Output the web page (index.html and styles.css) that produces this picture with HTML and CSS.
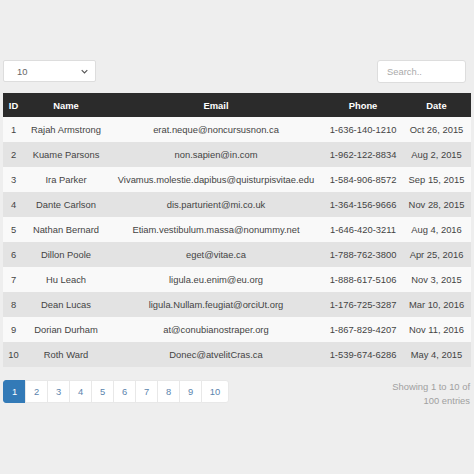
FILE: index.html
```html
<!DOCTYPE html>
<html lang="en">
<head>
    <meta charset="UTF-8">
    <meta name="viewport" content="width=device-width, initial-scale=1.0">
    <title>Users Table</title>
    <link rel="stylesheet" href="styles.css">
</head>
<body>
    <div class="container">
        <div class="toolbar">
            <div class="select-box">
                <span>10</span>
                <svg class="caret" viewBox="0 0 10 6" width="7" height="5"><path d="M1 1l4 4 4-4" fill="none" stroke="#555" stroke-width="1.6"/></svg>
            </div>
            <div class="search-box">Search..</div>
        </div>

        <table class="data-table">
            <colgroup>
                <col class="col-id">
                <col class="col-name">
                <col class="col-email">
                <col class="col-phone">
                <col class="col-date">
            </colgroup>
            <thead>
                <tr><th>ID</th><th>Name</th><th>Email</th><th>Phone</th><th>Date</th></tr>
            </thead>
            <tbody>
                <tr><td>1</td><td>Rajah Armstrong</td><td>erat.neque@noncursusnon.ca</td><td>1-636-140-1210</td><td>Oct 26, 2015</td></tr>
                <tr><td>2</td><td>Kuame Parsons</td><td>non.sapien@in.com</td><td>1-962-122-8834</td><td>Aug 2, 2015</td></tr>
                <tr><td>3</td><td>Ira Parker</td><td>Vivamus.molestie.dapibus@quisturpisvitae.edu</td><td>1-584-906-8572</td><td>Sep 15, 2015</td></tr>
                <tr><td>4</td><td>Dante Carlson</td><td>dis.parturient@mi.co.uk</td><td>1-364-156-9666</td><td>Nov 28, 2015</td></tr>
                <tr><td>5</td><td>Nathan Bernard</td><td>Etiam.vestibulum.massa@nonummy.net</td><td>1-646-420-3211</td><td>Aug 4, 2016</td></tr>
                <tr><td>6</td><td>Dillon Poole</td><td>eget@vitae.ca</td><td>1-788-762-3800</td><td>Apr 25, 2016</td></tr>
                <tr><td>7</td><td>Hu Leach</td><td>ligula.eu.enim@eu.org</td><td>1-888-617-5106</td><td>Nov 3, 2015</td></tr>
                <tr><td>8</td><td>Dean Lucas</td><td>ligula.Nullam.feugiat@orciUt.org</td><td>1-176-725-3287</td><td>Mar 10, 2016</td></tr>
                <tr><td>9</td><td>Dorian Durham</td><td>at@conubianostraper.org</td><td>1-867-829-4207</td><td>Nov 11, 2016</td></tr>
                <tr><td>10</td><td>Roth Ward</td><td>Donec@atvelitCras.ca</td><td>1-539-674-6286</td><td>May 4, 2015</td></tr>
            </tbody>
        </table>

        <div class="footer">
            <div class="pagination">
                <span class="page active">1</span>
                <span class="page">2</span>
                <span class="page">3</span>
                <span class="page">4</span>
                <span class="page">5</span>
                <span class="page">6</span>
                <span class="page">7</span>
                <span class="page">8</span>
                <span class="page">9</span>
                <span class="page wide">10</span>
            </div>
            <div class="info">Showing 1 to 10 of<br>100 entries</div>
        </div>
    </div>
</body>
</html>
```

FILE: styles.css
```css
body {
    margin: 0;
    background-color: #eeeeee;
    font-family: "Liberation Sans", Arial, sans-serif;
    font-size: 9.4px;
    color: #333;
}
.container {
    padding: 60px 4px 0 3px;
}
.toolbar {
    display: flex;
    justify-content: space-between;
    align-items: center;
    height: 22px;
    margin-bottom: 11px;
}
.select-box {
    width: 93px;
    height: 22px;
    box-sizing: border-box;
    background-color: #fff;
    border: 1px solid #ddd;
    border-radius: 2px;
    display: flex;
    justify-content: space-between;
    align-items: center;
    padding: 0 7px 0 13px;
    color: #666;
}
.search-box {
    width: 89px;
    height: 23px;
    box-sizing: border-box;
    background-color: #fff;
    border: 1px solid #ddd;
    border-radius: 3px;
    margin-right: 4px;
    padding: 0 9px;
    line-height: 21px;
    color: #aaa;
}
.data-table {
    width: 468px;
    border-collapse: collapse;
    table-layout: fixed;
}
.col-id { width: 21px; }
.col-name { width: 84px; }
.col-email { width: 216px; }
.col-phone { width: 78px; }
.col-date { width: 69px; }
.data-table th {
    background-color: #2b2b2b;
    color: #fff;
    font-weight: bold;
    height: 24px;
    padding: 0;
    text-align: center;
}
.data-table td {
    height: 25px;
    padding: 0;
    text-align: center;
    white-space: nowrap;
    color: #444;
}
.data-table tbody tr:nth-child(odd) {
    background-color: #f9f9f9;
}
.data-table tbody tr:nth-child(even) {
    background-color: #e3e3e3;
}
.footer {
    display: flex;
    justify-content: space-between;
    align-items: flex-start;
    margin-top: 13px;
}
.pagination {
    display: flex;
}
.page {
    width: 23px;
    height: 23px;
    box-sizing: border-box;
    background-color: #fff;
    border: 1px solid #e8e8e8;
    margin-left: -1px;
    display: flex;
    justify-content: center;
    align-items: center;
    color: #5b84ad;
}
.page:first-child {
    margin-left: 0;
    border-radius: 3px 0 0 3px;
}
.page.wide {
    width: 28px;
    border-radius: 0 3px 3px 0;
}
.page.active {
    background-color: #337ab7;
    border-color: #337ab7;
    color: #fff;
}
.info {
    text-align: right;
    color: #a0a0a0;
    line-height: 14px;
    margin-top: 0;
}
```
